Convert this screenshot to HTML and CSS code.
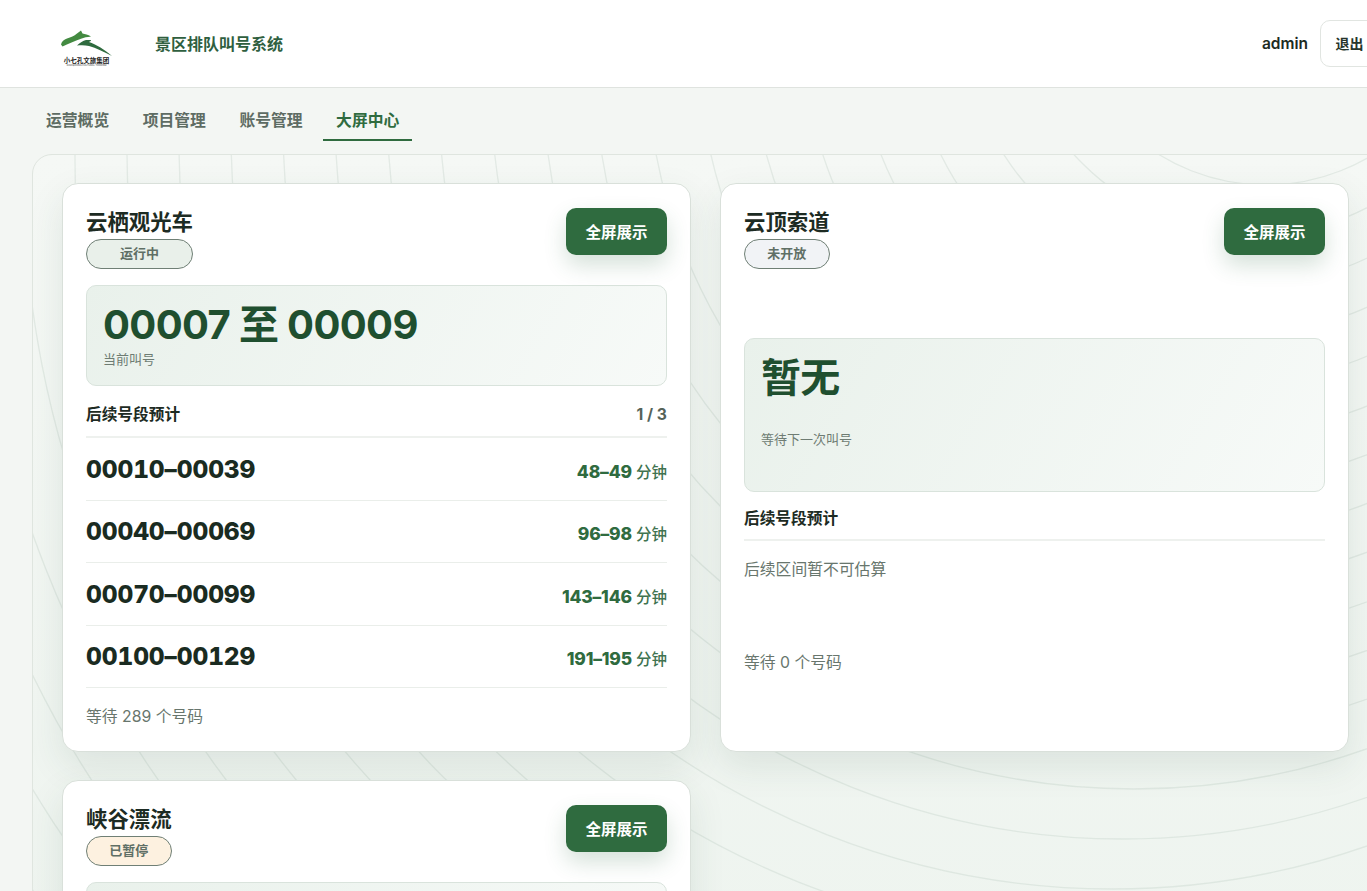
FILE: index.html
```html
<!DOCTYPE html>
<html lang="zh">
<head>
    <meta charset="UTF-8">
    <meta name="viewport" content="width=device-width, initial-scale=1.0">
    <title>景区排队叫号系统</title>
    <link rel="stylesheet" href="styles.css">
</head>
<body>
<div class="app">
    <!-- 顶部栏 -->
    <header class="topbar">
        <div class="brand">
            <svg class="logo" viewBox="0 0 60 40" width="60" height="40" role="img" aria-label="小七孔文旅集团">
                <path fill="#438a41" d="M5 19.5 C5.5 16.5 8 14.500 11 13.500 C15 12 18 11 21 8.500 L25 5.500 L26.500 8.500 C29 9 32 9.500 35 11.500 C31 12 28 12.500 25 13.800 C19 16 12 19 6.500 21.500 Z"/>
                <path fill="#2f6b3f" d="M21 20.500 C24 17.500 27 15.800 30 15 L35 15 C35 16 34 16.500 33 17 C40 19.500 48 24 56 31 C48 27 40 23 33 21 C29 20 25 20 21 20.500 Z"/>
                <text class="logo-name" x="30.5" y="38" text-anchor="middle">小七孔文旅集团</text>
                <text class="logo-sub" x="30.5" y="41" text-anchor="middle">XIAOQIKONG CULTURAL TOURISM</text>
            </svg>
            <span class="brand-title">景区排队叫号系统</span>
        </div>
        <div class="user-box">
            <span class="user-name">admin</span>
            <button class="logout-btn">退出</button>
        </div>
    </header>

    <nav class="tabs">
        <a class="tab">运营概览</a>
        <a class="tab">项目管理</a>
        <a class="tab">账号管理</a>
        <a class="tab active">大屏中心</a>
    </nav>

    <main class="panel">
        <!-- 背景等高线 -->
        <svg class="panel-lines" aria-hidden="true">
            <g transform="translate(-33 -155)">
                <circle cx="1266" cy="-18" r="203"/>
                <circle cx="1255" cy="-9" r="244"/>
                <circle cx="1244" cy="1" r="285"/>
                <circle cx="1233" cy="10" r="326"/>
                <circle cx="1222" cy="19" r="367"/>
                <circle cx="1211" cy="29" r="408"/>
                <circle cx="1200" cy="38" r="449"/>
                <circle cx="1189" cy="47" r="490"/>
                <circle cx="1178" cy="56" r="531"/>
                <circle cx="1167" cy="66" r="572"/>
                <circle cx="1156" cy="75" r="613"/>
                <circle cx="1145" cy="84" r="654"/>
                <circle cx="1134" cy="94" r="695"/>
                <circle cx="1123" cy="103" r="736"/>
                <circle cx="1112" cy="112" r="777"/>
                <circle cx="1101" cy="122" r="818"/>
                <circle cx="1090" cy="131" r="859"/>
                <circle cx="1079" cy="140" r="900"/>
                <circle cx="1068" cy="149" r="941"/>
                <circle cx="1057" cy="159" r="982"/>
                <circle cx="1046" cy="168" r="1023"/>
                <circle cx="1035" cy="177" r="1064"/>
                <circle cx="1024" cy="187" r="1105"/>
                <circle cx="1013" cy="196" r="1146"/>
                <circle cx="1002" cy="205" r="1187"/>
            </g>
        </svg>

        <div class="card-grid">
            <!-- 云栖观光车 -->
            <section class="card">
                <div class="card-head">
                    <div class="card-title-box">
                        <h2 class="card-title">云栖观光车</h2>
                        <span class="badge badge-run">运行中</span>
                    </div>
                    <button class="screen-btn">全屏展示</button>
                </div>
                <div class="call-box">
                    <div class="call-num">00007 至 00009</div>
                    <div class="call-label">当前叫号</div>
                </div>
                <div class="next-head">
                    <span>后续号段预计</span>
                    <span class="next-page">1 / 3</span>
                </div>
                <div class="next-row">
                    <span class="next-range">00010–00039</span>
                    <span class="next-time"><b>48–49</b> 分钟</span>
                </div>
                <div class="next-row">
                    <span class="next-range">00040–00069</span>
                    <span class="next-time"><b>96–98</b> 分钟</span>
                </div>
                <div class="next-row">
                    <span class="next-range">00070–00099</span>
                    <span class="next-time"><b>143–146</b> 分钟</span>
                </div>
                <div class="next-row">
                    <span class="next-range">00100–00129</span>
                    <span class="next-time"><b>191–195</b> 分钟</span>
                </div>
                <div class="wait-text">等待 289 个号码</div>
            </section>

            <!-- 云顶索道 -->
            <section class="card">
                <div class="card-head">
                    <div class="card-title-box">
                        <h2 class="card-title">云顶索道</h2>
                        <span class="badge badge-closed">未开放</span>
                    </div>
                    <button class="screen-btn">全屏展示</button>
                </div>
                <div class="call-box call-box-empty">
                    <div class="call-num">暂无</div>
                    <div class="call-label">等待下一次叫号</div>
                </div>
                <div class="next-head next-head-empty">
                    <span>后续号段预计</span>
                </div>
                <div class="empty-text">后续区间暂不可估算</div>
                <div class="wait-text wait-text-empty">等待 0 个号码</div>
            </section>

            <!-- 峡谷漂流 -->
            <section class="card">
                <div class="card-head">
                    <div class="card-title-box">
                        <h2 class="card-title">峡谷漂流</h2>
                        <span class="badge badge-pause">已暂停</span>
                    </div>
                    <button class="screen-btn">全屏展示</button>
                </div>
                <div class="call-box"></div>
            </section>
        </div>
    </main>
</div>
</body>
</html>
```

FILE: styles.css
```css
html, body {
    margin: 0;
    height: 891px;
    overflow: hidden;
}
body {
    font-family: Inter, "Noto Sans CJK SC", sans-serif;
    background-color: #f3f6f3;
    color: #1d2b23;
}
.app {
    width: 1411px;
}
.topbar {
    display: flex;
    justify-content: space-between;
    align-items: center;
    height: 88px;
    padding: 0 32px 0 56px;
    box-sizing: border-box;
    background-color: #fff;
    border-bottom: 1px solid #dfe3df;
}
.brand {
    display: flex;
    align-items: center;
    gap: 39px;
}
.logo {
    display: block;
    margin-top: 3px;
    overflow: visible;
}
.logo-name {
    font-size: 6.5px;
    font-weight: 700;
    fill: #222;
}
.logo-sub {
    font-size: 2.4px;
    font-weight: 500;
    fill: #555;
}
.brand-title {
    margin-bottom: 2px;
    font-size: 16px;
    font-weight: 700;
    color: #2f5f3f;
}
.user-box {
    display: flex;
    align-items: center;
    gap: 12px;
}
.user-name {
    font-size: 15.5px;
    font-weight: 600;
}
.logout-btn {
    width: 59px;
    height: 47px;
    padding: 0 0 2px;
    font: inherit;
    font-size: 14px;
    font-weight: 600;
    color: #26352c;
    background-color: #fff;
    border: 1px solid #e1e5e1;
    border-radius: 10px;
}
.tabs {
    display: flex;
    gap: 7.5px;
    height: 53px;
    padding: 13px 0 0 33px;
    box-sizing: border-box;
    margin-bottom: 13px;
}
.tab {
    height: 40px;
    padding: 0 13px;
    font-size: 15.8px;
    font-weight: 600;
    line-height: 39px;
    color: #5e6c63;
    box-sizing: border-box;
}
.tab.active {
    color: #2f6b3f;
    border-bottom: 2px solid #2f6b3f;
}
.panel {
    position: relative;
    width: 1379px;
    margin-left: 32px;
    height: 800px;
    padding: 28px 29px;
    box-sizing: border-box;
    border: 1px solid #dfe5df;
    border-radius: 20px;
    background: linear-gradient(180deg, #f5f8f5 0%, #eef4ef 100%);
    overflow: hidden;
}
.panel-lines {
    position: absolute;
    top: 0;
    left: 0;
    width: 100%;
    height: 100%;
}
.panel-lines circle {
    fill: none;
    stroke: #b5c6ba;
    stroke-opacity: 0.28;
    stroke-width: 1.3;
}
.card-grid {
    position: relative;
    display: grid;
    grid-template-columns: 629px 629px;
    grid-template-rows: 569px auto;
    gap: 28px 29px;
}
.card {
    padding: 24px 23px 0;
    background-color: #fff;
    border: 1px solid #d9e0da;
    border-radius: 16px;
    box-sizing: border-box;
    box-shadow: 0 14px 36px rgba(40, 80, 55, 0.1);
}
.card-head {
    display: flex;
    justify-content: space-between;
    align-items: flex-start;
    height: 77px;
}
.card-title-box {
    display: flex;
    flex-direction: column;
    align-items: stretch;
}
.card-title {
    margin: 0;
    font-size: 21.4px;
    font-weight: 700;
    line-height: 28px;
    color: #1d2b23;
}
.badge {
    height: 30px;
    margin-top: 3px;
    font-size: 13px;
    font-weight: 600;
    line-height: 27px;
    text-align: center;
    color: #5f6f65;
    border: 1px solid #6f7f75;
    border-radius: 15px;
    box-sizing: border-box;
}
.badge-run {
    background-color: #e9f0ea;
}
.badge-closed {
    background-color: #f1f3f6;
}
.badge-pause {
    background-color: #fdf1e0;
}
.screen-btn {
    width: 101px;
    height: 47px;
    padding: 0 0 2px;
    font: inherit;
    font-size: 15.5px;
    font-weight: 700;
    color: #fff;
    background-color: #2f6b3f;
    border: none;
    border-radius: 10px;
    box-shadow: 0 10px 22px rgba(47, 107, 63, 0.2);
}
.call-box {
    height: 101px;
    padding: 14px 16px;
    box-sizing: border-box;
    background: linear-gradient(120deg, #e9f1eb 0%, #f7faf8 100%);
    border: 1px solid #d9e3dc;
    border-radius: 10px;
}
.call-box-empty {
    height: 154px;
    margin-top: 53px;
}
.call-num {
    font-size: 40px;
    font-weight: 700;
    line-height: 50px;
    letter-spacing: -0.65px;
    color: #1f4f2f;
}
.call-label {
    font-size: 13px;
    line-height: 18px;
    color: #6e7c73;
}
.call-box-empty .call-label {
    margin-top: 27px;
}
.next-head {
    display: flex;
    justify-content: space-between;
    height: 52px;
    padding-top: 17px;
    box-sizing: border-box;
    font-size: 15.7px;
    font-weight: 700;
    line-height: 24px;
    border-bottom: 2px solid #eef1ee;
}
.next-head-empty {
    height: 49px;
    padding-top: 15px;
}
.next-page {
    font-weight: 700;
    color: #55635a;
}
.next-row {
    display: flex;
    justify-content: space-between;
    align-items: center;
    height: 62.5px;
    box-sizing: border-box;
    border-bottom: 1px solid #eaeeea;
}
.next-range {
    font-size: 24.5px;
    font-weight: 800;
    font-variant-numeric: tabular-nums;
    letter-spacing: -0.1px;
    color: #1a2b21;
}
.next-time {
    margin-top: 4px;
    font-size: 15.5px;
    font-weight: 500;
    color: #3f7350;
}
.next-time b {
    font-size: 17.5px;
    font-weight: 800;
    letter-spacing: -0.2px;
    color: #2f6b3f;
}
.wait-text {
    margin-top: 17px;
    font-size: 15.8px;
    line-height: 24px;
    color: #68766d;
}
.empty-text {
    margin-top: 17px;
    font-size: 15.8px;
    line-height: 24px;
    color: #68766d;
}
.wait-text-empty {
    margin-top: 69px;
}
```
